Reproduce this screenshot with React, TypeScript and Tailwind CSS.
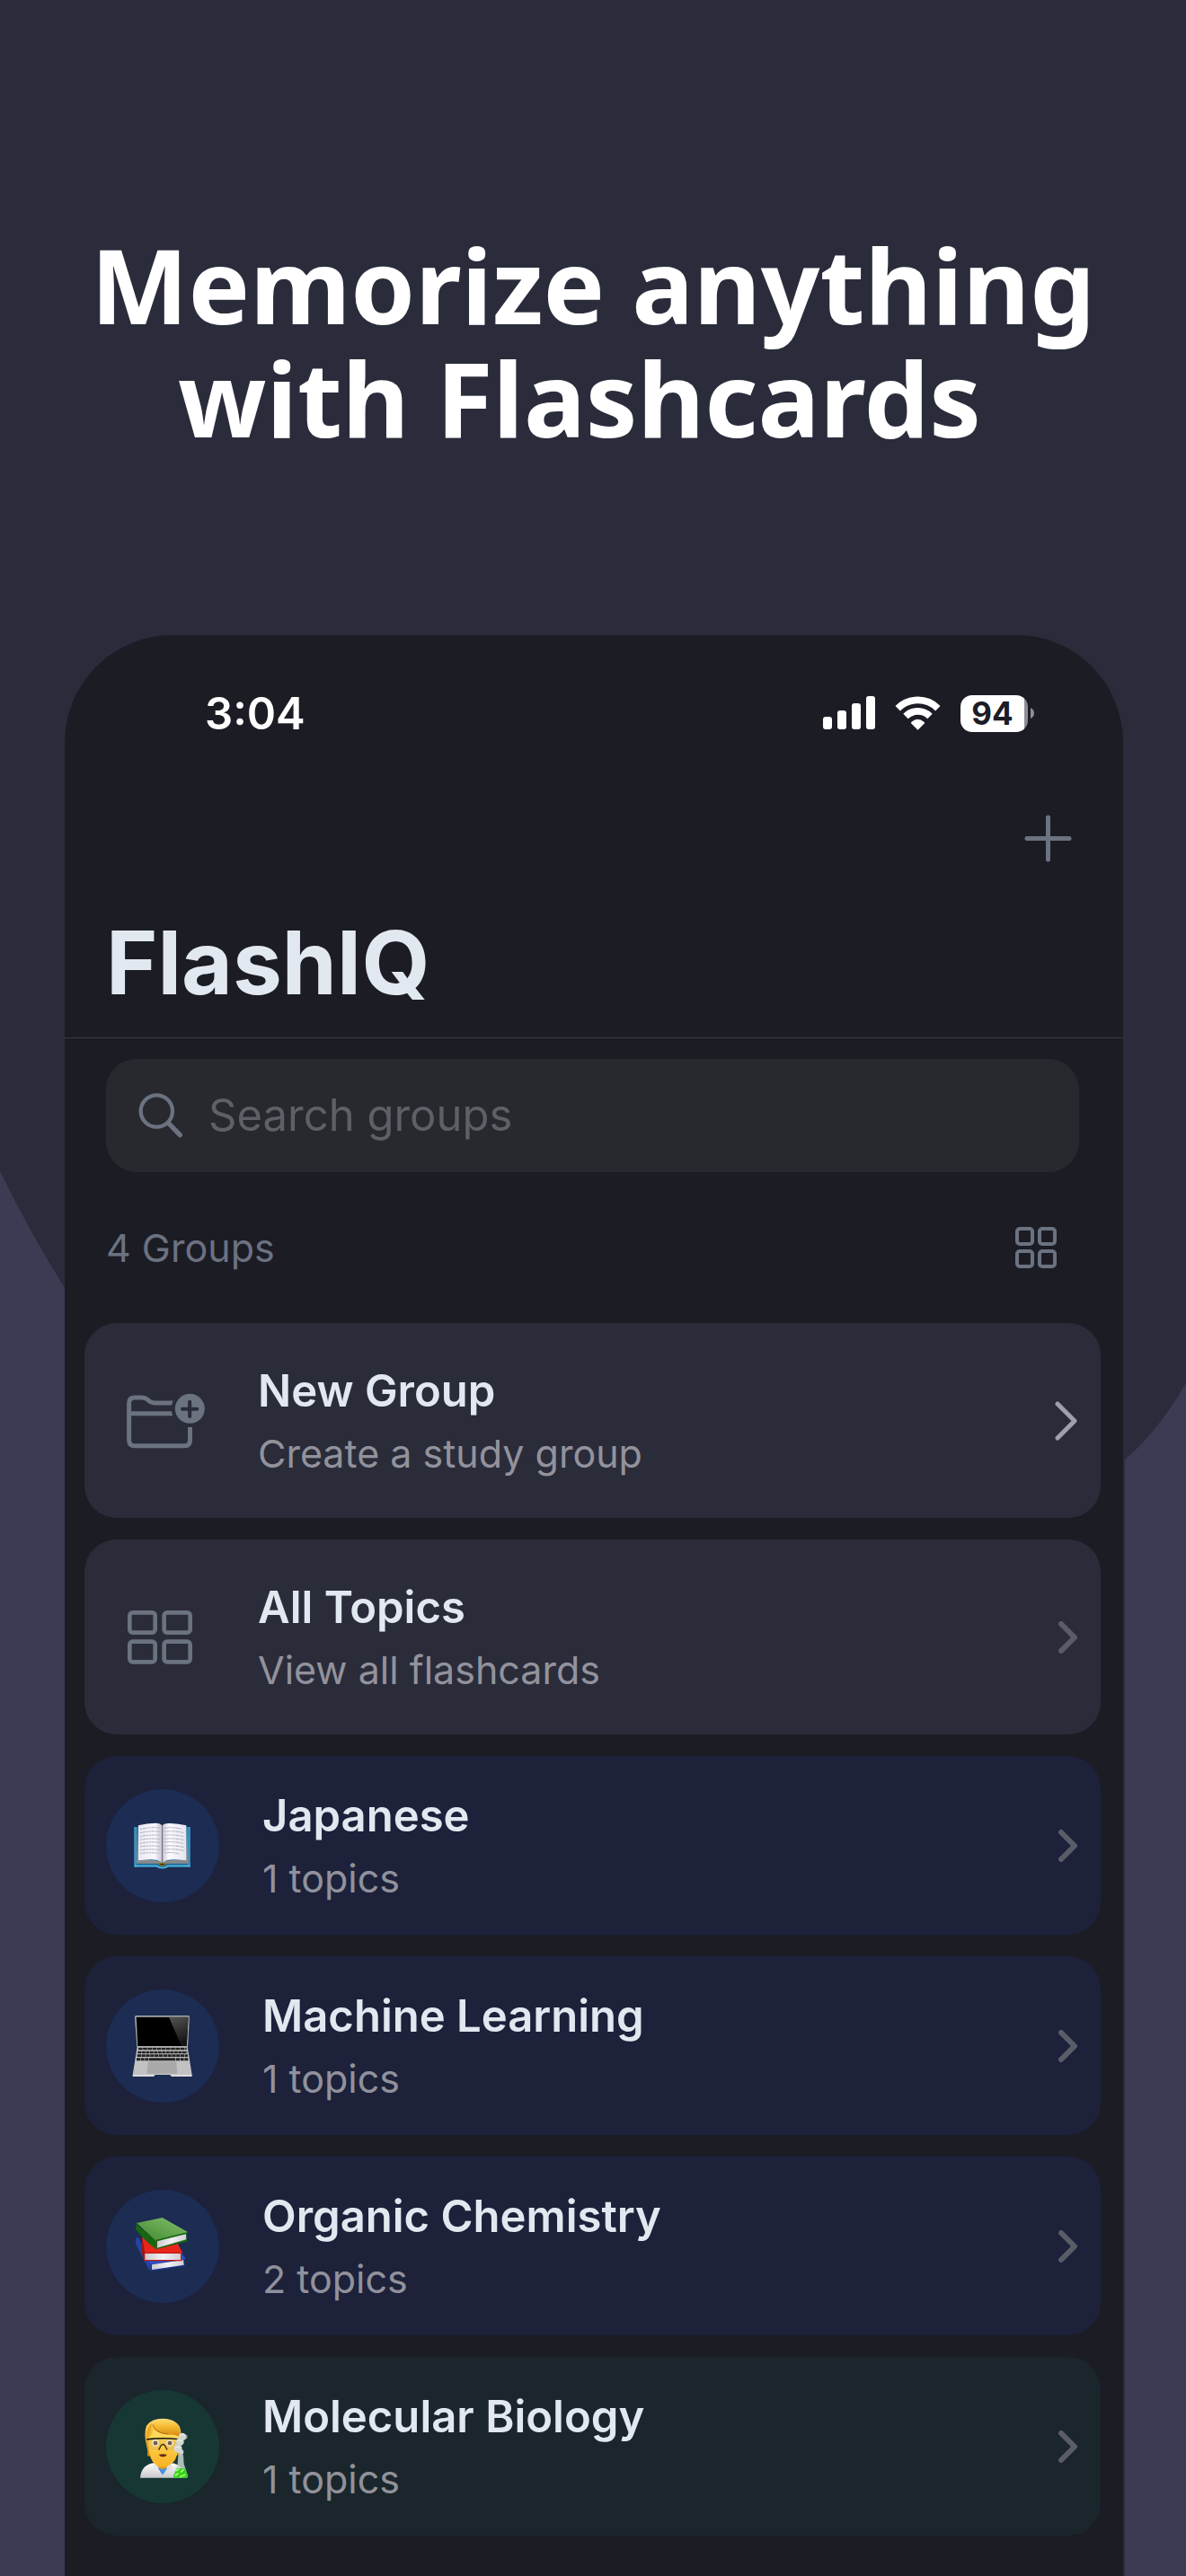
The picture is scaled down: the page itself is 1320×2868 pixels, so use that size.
import type { ReactNode } from "react";

function Backdrop() {
  return (
    <svg
      className="absolute inset-0 h-full w-full"
      viewBox="0 0 1320 2868"
      preserveAspectRatio="none"
      aria-hidden="true"
    >
      <path
        d="M0 1304Q33 1372 72 1434Q330 1800 700 1800Q1020 1800 1252 1625Q1288 1595 1320 1540V2868H0Z"
        fill="#3b3c53"
      />
    </svg>
  );
}

function SignalIcon() {
  return (
    <svg width="58" height="38" viewBox="0 0 58 38" fill="#fff" aria-label="Signal strength">
      <rect x="0" y="23" width="10" height="14" rx="3" />
      <rect x="16" y="16" width="10" height="21" rx="3" />
      <rect x="32" y="8" width="10" height="29" rx="3" />
      <rect x="48" y="0" width="10" height="37" rx="3" />
    </svg>
  );
}

function WifiIcon() {
  return (
    <svg width="51" height="38" viewBox="408 254 153 114" fill="none" stroke="#fff" strokeWidth="23" aria-label="Wi-Fi">
      <path d="M417.500 295A95 95 0 0 1 551.500 295" />
      <path d="M444 321.500A57.500 57.500 0 0 1 525 321.500" />
      <path d="M484.500 367L462 345Q461 342 464 340Q484.500 322 505 340Q508 342 507 345Z" fill="#fff" stroke="none" />
    </svg>
  );
}

function Battery() {
  return (
    <div className="flex items-center gap-[3px]">
      <div className="flex h-[41px] w-[75px] items-center justify-center rounded-[13px] bg-linear-to-r from-white from-95% to-[#8e8e94] to-95% pr-1 text-[35px] leading-none font-bold text-[#1c1c25]">
        94
      </div>
      <svg width="4" height="12" viewBox="0 0 4 12" fill="#8e8e94" aria-hidden="true">
        <path d="M0 0Q4 2 4 6T0 12Z" />
      </svg>
    </div>
  );
}

function PlusIcon() {
  return (
    <svg width="53" height="53" viewBox="0 0 53 53" stroke="#6b7280" strokeWidth="5" strokeLinecap="round" aria-hidden="true">
      <path d="M26.500 3V50M3 26.500H50" />
    </svg>
  );
}

function SearchIcon() {
  return (
    <svg width="50" height="50" viewBox="41 53 150 150" fill="none" stroke="#6b7280" strokeLinecap="round" aria-hidden="true">
      <circle cx="102" cy="113" r="53" strokeWidth="13" />
      <path d="M142 154L180 193" strokeWidth="16" />
    </svg>
  );
}

function SmallGridIcon() {
  return (
    <svg width="46" height="46" viewBox="0 0 46 46" fill="none" stroke="#6b7280" strokeWidth="4" aria-hidden="true">
      <rect x="2" y="2" width="17" height="17" rx="3" />
      <rect x="27" y="2" width="17" height="17" rx="3" />
      <rect x="2" y="27" width="17" height="17" rx="3" />
      <rect x="27" y="27" width="17" height="17" rx="3" />
    </svg>
  );
}

function FolderPlusIcon() {
  return (
    <svg width="90" height="62" viewBox="30 36 270 186" fill="none" aria-hidden="true">
      <g stroke="#6b7280" strokeWidth="15">
        <path d="M200 69H126Q117 69 110 64L103 58Q95 51 85 51H60Q41 51 41 69V194Q41 212 60 212H226Q244.500 212 244.500 194V130" />
        <path d="M41 104H200" />
      </g>
      <circle cx="244" cy="88" r="62" fill="#2b2c3a" />
      <circle cx="244" cy="88" r="49.500" fill="#6b7280" />
      <path d="M243.500 65V114M219 89.500H268" stroke="#2b2c3a" strokeWidth="12" strokeLinecap="round" />
    </svg>
  );
}

function GridIcon() {
  return (
    <svg width="74" height="60" viewBox="30 759 222 180" fill="none" stroke="#6b7280" strokeWidth="14" aria-hidden="true">
      <rect x="43" y="766" width="85" height="67" rx="10" />
      <rect x="158" y="766" width="87" height="67" rx="10" />
      <rect x="43" y="863" width="85" height="68" rx="10" />
      <rect x="158" y="863" width="87" height="68" rx="10" />
    </svg>
  );
}

function Chevron({ large = false }: { large?: boolean }) {
  return large ? (
    <svg className="shrink-0" width="25" height="44" viewBox="0 0 25 44" fill="none" stroke="#a09fab" strokeWidth="5" strokeLinecap="round" strokeLinejoin="round" aria-hidden="true">
      <path d="M3 3L22 22L3 41" />
    </svg>
  ) : (
    <svg className="shrink-0" width="21" height="36" viewBox="0 0 21 36" fill="none" stroke="#5a5c68" strokeWidth="6" strokeLinecap="round" strokeLinejoin="round" aria-hidden="true">
      <path d="M3 3L18 18L3 33" />
    </svg>
  );
}

function OpenBook() {
  return (
    <svg className="h-full w-full" viewBox="54 94 378 378" aria-hidden="true">
      <defs>
        <linearGradient id="cover" x1="0" x2="1">
          <stop offset="0" stopColor="#49a9d6" />
          <stop offset="0.06" stopColor="#1f6f9c" />
          <stop offset="0.94" stopColor="#1f6f9c" />
          <stop offset="1" stopColor="#49a9d6" />
        </linearGradient>
        <linearGradient id="pageLeft" x1="0" x2="1">
          <stop offset="0" stopColor="#e9e8f2" />
          <stop offset="0.7" stopColor="#f8f7fd" />
          <stop offset="1" stopColor="#c4c3cf" />
        </linearGradient>
        <linearGradient id="pageRight" x1="0" x2="1">
          <stop offset="0" stopColor="#cbcad6" />
          <stop offset="0.25" stopColor="#fbfaff" />
          <stop offset="1" stopColor="#e6e5ef" />
        </linearGradient>
      </defs>
      <path d="M148 220H335V354H262Q254 360 242 360T222 354H148Z" fill="url(#cover)" />
      <path d="M150 348H224Q232 355 242 355T260 348H334V353H262Q254 359 242 359T222 353H150Z" fill="#55bdea" />
      <path d="M158 214L163 332Q215 326 241 338Q270 326 321 332L325 214L329 342H258L242 348L228 342H156Z" fill="#8b8a8c" />
      <path d="M227 341H257L252 349Q242 353 233 349Z" fill="#8a7418" />
      <path d="M234 343H250L247 347H237Z" fill="#2b2410" />
      <path d="M162 215Q190 207 220 207Q236 208 241 215V339Q226 328 200 329L162 332Z" fill="url(#pageLeft)" />
      <path d="M243 215Q249 207 268 208Q295 209 322 215V332L284 329Q256 328 243 339Z" fill="url(#pageRight)" />
      <path d="M242 214V340" stroke="#6e6c76" strokeWidth="3" />
      <g fill="none" stroke="#8d8b95" strokeWidth="2" strokeDasharray="7 2 11 2 5 2">
        <path d="M168 228Q200 220 233 223M168 240Q200 232 234 236M168 252Q200 245 233 248M168 263Q200 257 235 261M168 275Q200 268 234 272M168 286Q200 281 234 285M168 298Q200 292 235 297M168 309Q200 304 230 308" />
        <path d="M248 224Q275 219 306 227M247 236Q280 231 314 240M248 248Q280 244 312 252M248 260Q280 256 315 264M247 271Q280 267 314 276M248 284Q280 280 315 288M247 296Q280 291 316 300M250 307Q275 303 297 310" />
      </g>
    </svg>
  );
}

function Laptop() {
  return (
    <svg className="h-full w-full" viewBox="54 763 378 378" aria-hidden="true">
      <defs>
        <linearGradient id="glare" x1="0" y1="0" x2="0.3" y2="1">
          <stop offset="0" stopColor="#555" />
          <stop offset="1" stopColor="#151515" />
        </linearGradient>
      </defs>
      <path d="M155 850H328Q333 850 333 855L327 955H157L150 855Q150 850 155 850Z" fill="#a9a9a9" />
      <path d="M155 855H329L323 952H160Z" fill="#000" />
      <path d="M264 855H329L323 952H306Z" fill="url(#glare)" />
      <path d="M158 954H326L341 1048Q341 1053 336 1053H273L268 1048H218L213 1053H148Q143 1053 143 1048Z" fill="#c2c2c2" />
      <path d="M143 1048H341V1053H273L268 1048H218L213 1053H143Z" fill="#e3e3e3" />
      <g fill="none" stroke="#232323" strokeWidth="8">
        <path d="M162 961H323" strokeDasharray="14 1.500" />
        <path d="M160 973H325" strokeDasharray="12 1.500" />
        <path d="M158 984H327" strokeDasharray="13 1.500" />
      </g>
      <path d="M156 996H328" stroke="#232323" strokeWidth="9" fill="none" strokeDasharray="12 2 12 2 12 2 88 2 12 2 12 2 12 2" />
      <path d="M194 1004H289L292 1044H191Z" fill="#a9a9a9" />
    </svg>
  );
}

function BookStack() {
  return (
    <svg className="h-full w-full" viewBox="54 172 378 378" aria-hidden="true">
      <defs>
        <linearGradient id="greenTop" x1="0" y1="1" x2="1" y2="0">
          <stop offset="0" stopColor="#3f8a2f" />
          <stop offset="1" stopColor="#86c06c" />
        </linearGradient>
        <linearGradient id="leaves" x1="0" x2="1">
          <stop offset="0" stopColor="#c9c9cf" />
          <stop offset="0.5" stopColor="#f2f2f5" />
          <stop offset="1" stopColor="#cfcfd4" />
        </linearGradient>
      </defs>
      <path d="M153 334L162 330L207 415L201 443Q192 432 153 352Z" fill="#2443a5" />
      <path d="M190 405L305 382L319 401L314 408L206 424Z" fill="#2b4fc4" />
      <path d="M205 422L314 404L317 426L204 444Z" fill="#1d3791" />
      <path d="M207 422L312 406L314 423L207 439Z" fill="url(#leaves)" />
      <path d="M174 330L184 380L183 409Q176 400 174 380Z" fill="#a11410" />
      <path d="M174 330L290 345L310 383H184Z" fill="#e8261c" />
      <path d="M182 381H310L305 388L306 405L309 410H182Z" fill="#c81a14" />
      <path d="M184 385H303V406H184Z" fill="url(#leaves)" />
      <path d="M153 286L220 340V370Q185 345 154 305Z" fill="#17660f" />
      <path d="M157 283L242 265L328 314L221 341Z" fill="url(#greenTop)" />
      <path d="M220 340L328 313L322 322L324 340L330 343L222 371Z" fill="#17660f" />
      <path d="M225 344L321 320L322 338L225 366Z" fill="url(#leaves)" />
      <path d="M157 283L221 341" stroke="#4d9a3a" strokeWidth="3" fill="none" />
    </svg>
  );
}

function Scientist() {
  return (
    <svg className="h-full w-full" viewBox="54 841 378 378" aria-hidden="true">
      <defs>
        <linearGradient id="hair" x1="0" y1="0" x2="0" y2="1">
          <stop offset="0" stopColor="#ffdc74" />
          <stop offset="0.4" stopColor="#f7bb34" />
          <stop offset="1" stopColor="#cf850f" />
        </linearGradient>
        <linearGradient id="face" x1="0" y1="0" x2="0" y2="1">
          <stop offset="0" stopColor="#ffe062" />
          <stop offset="1" stopColor="#f8b322" />
        </linearGradient>
        <linearGradient id="coat" x1="0" y1="0" x2="0" y2="1">
          <stop offset="0" stopColor="#fdfdfd" />
          <stop offset="1" stopColor="#c9c9cd" />
        </linearGradient>
      </defs>
      <path d="M191 1061Q195 1050 190 1030Q179 985 189 960Q205 936 244 936Q284 937 299 962Q308 982 303 1020Q298 1035 300 1056L278 1062H204Z" fill="url(#hair)" />
      <path d="M225 1085H262V1108L244 1122L226 1108Z" fill="#e09a18" />
      <path d="M168 1134Q172 1088 218 1084L243 1116L268 1084Q300 1086 310 1110L313 1134Z" fill="url(#coat)" />
      <path d="M226 1100L243 1106L260 1100L246 1122H240Z" fill="#4f8fe0" />
      <path d="M220 1084L212 1100L240 1124L226 1100Z" fill="#e9e9ec" />
      <path d="M267 1084L275 1100L247 1124L260 1100Z" fill="#dcdce0" />
      <path d="M196 1000Q210 990 212 972Q240 995 296 990Q298 1060 280 1080Q262 1098 243 1098Q224 1098 210 1080Q193 1058 196 1000Z" fill="url(#face)" />
      <path d="M208 950Q206 975 196 998Q190 1004 190 990Q190 965 208 950Z" fill="#e9a726" />
      <path d="M208 950Q212 988 262 989Q290 990 300 998Q303 970 292 955Q262 930 220 942Z" fill="url(#hair)" />
      <path d="M210 956Q216 984 262 988" stroke="#b26d0b" strokeWidth="3" fill="none" />
      <ellipse cx="219" cy="1018" rx="13" ry="12" fill="#f1ecd9" />
      <ellipse cx="267" cy="1018" rx="13" ry="12" fill="#f1ecd9" />
      <circle cx="219" cy="1018" r="7" fill="#574437" />
      <circle cx="267" cy="1018" r="7" fill="#574437" />
      <path d="M192 1006H294L290 1034Q278 1044 258 1041L250 1026Q244 1020 238 1026L230 1041Q206 1044 196 1034Z" fill="#cda75a" fillOpacity="0.25" />
      <path d="M190 1003Q243 997 296 1003V1007Q243 1002 190 1008Z" fill="#141414" />
      <path d="M230 1041L237 1027Q244 1018 251 1027L258 1041" fill="none" stroke="#3a2b12" strokeWidth="4" />
      <path d="M230 1056Q244 1053 257 1056Q254 1064 244 1064T230 1056Z" fill="#6a2a1a" />
      <g fill="#cfd6d4">
        <circle cx="309" cy="997" r="13" />
        <circle cx="301" cy="1014" r="13" />
        <circle cx="294" cy="1036" r="14" />
        <circle cx="304" cy="1048" r="9" />
        <circle cx="318" cy="997" r="8" fillOpacity="0.600" />
      </g>
      <g fill="none" stroke="#f4f6f6" strokeWidth="3">
        <path d="M300 992Q309 984 317 994M292 1012Q301 1004 310 1014M284 1036Q292 1026 302 1034" />
      </g>
      <path d="M295 1056H312L314 1088L327 1126Q328 1134 322 1134H284Q278 1134 279 1127L293 1088Z" fill="#c4d6cd" fillOpacity="0.850" />
      <path d="M291 1103H317L327 1127Q328 1134 322 1134H284Q278 1134 279 1127Z" fill="#35d11c" />
      <path d="M289 1110L296 1106M286 1126L294 1120M304 1114L312 1108M302 1130L318 1124" stroke="#a8ff70" strokeWidth="5" strokeLinecap="round" />
    </svg>
  );
}

function CardText({ title, detail }: { title: string; detail: string }) {
  return (
    <span className="block min-w-0 flex-1 pt-[5px]">
      <span className="block text-[49px] leading-[68px] font-semibold text-[#e2e8f0]">{title}</span>
      <span className="block text-[43px] leading-[70px] text-[#a1a1aa]/90">{detail}</span>
    </span>
  );
}

type ActionProps = { title: string; detail: string; icon: ReactNode; large?: boolean };

function ActionCard({ title, detail, icon, large }: ActionProps) {
  return (
    <li>
      <button type="button" className="flex h-[217px] w-full items-center rounded-[36px] bg-[#2b2c3a] pr-[26px] pl-[46px] text-left">
        <span className="w-[147px] shrink-0">{icon}</span>
        <CardText title={title} detail={detail} />
        <Chevron large={large} />
      </button>
    </li>
  );
}

type Group = { title: string; detail: string; icon: ReactNode; card: string; badge: string };

const blue = { card: "bg-[#1d213a]", badge: "bg-[#1c2c52]" };
const green = { card: "bg-[#1a262b]", badge: "bg-[#173735]" };

const groups: Group[] = [
  { title: "Japanese", detail: "1 topics", icon: <OpenBook />, ...blue },
  { title: "Machine Learning", detail: "1 topics", icon: <Laptop />, ...blue },
  { title: "Organic Chemistry", detail: "2 topics", icon: <BookStack />, ...blue },
  { title: "Molecular Biology", detail: "1 topics", icon: <Scientist />, ...green },
];

function GroupCard({ title, detail, icon, card, badge }: Group) {
  return (
    <li>
      <button type="button" className={`flex h-[199px] w-full items-center gap-12 rounded-[36px] pr-[26px] pl-6 text-left ${card}`}>
        <span className={`size-[126px] shrink-0 overflow-hidden rounded-full ${badge}`}>{icon}</span>
        <CardText title={title} detail={detail} />
        <Chevron />
      </button>
    </li>
  );
}

export default function App() {
  return (
    <main className="relative flex min-h-screen flex-col overflow-hidden bg-[#2b2c3b] font-['Inter',sans-serif]">
      <Backdrop />
      <h1 className="relative pt-[254px] pb-[201px] text-center font-['Noto_Sans',sans-serif] text-[115px] leading-[126px] font-bold text-white">
        Memorize anything
        <br />
        with Flashcards&nbsp;
      </h1>

      <section className="relative mr-[68px] ml-[72px] flex-1 rounded-t-[120px] border-r-2 border-[#2b2c3b] bg-[#1c1c25] pb-[45px]">
        <div className="flex h-[174px] items-center justify-between pr-[99px] pl-[156px] text-white">
          <time className="text-[49px] leading-none font-semibold">3:04</time>
          <div className="flex items-center gap-[22px]">
            <SignalIcon />
            <WifiIcon />
            <Battery />
          </div>
        </div>

        <header className="border-b border-[#3a3b42]">
          <div className="flex h-[104px] items-center justify-end pr-[57px]">
            <button type="button" aria-label="Add group">
              <PlusIcon />
            </button>
          </div>
          <h2 className="px-[46px] pt-[27px] pb-[23px] text-[98px] leading-[120px] font-bold text-[#e2e8f0]">FlashIQ</h2>
        </header>

        <label className="mt-[23px] mr-[49px] ml-[46px] flex h-[126px] items-center gap-7 rounded-[34px] bg-[#28282f] px-9">
          <SearchIcon />
          <input
            type="search"
            aria-label="Search groups"
            placeholder="Search groups"
            className="min-w-0 flex-1 bg-transparent text-[49px] text-[#e2e8f0] outline-none placeholder:text-[#5f5f67]"
          />
        </label>

        <div className="flex h-[168px] items-center justify-between pr-[74px] pl-[46px]">
          <p className="text-[43px] leading-none text-[#6b7280]">4 Groups</p>
          <button type="button" aria-label="Grid view">
            <SmallGridIcon />
          </button>
        </div>

        <ul className="mr-[25px] ml-[22px] flex flex-col gap-6">
          <ActionCard title="New Group" detail="Create a study group" icon={<FolderPlusIcon />} large />
          <ActionCard title="All Topics" detail="View all flashcards" icon={<GridIcon />} />
          {groups.map((group) => (
            <GroupCard key={group.title} {...group} />
          ))}
        </ul>
      </section>
    </main>
  );
}
